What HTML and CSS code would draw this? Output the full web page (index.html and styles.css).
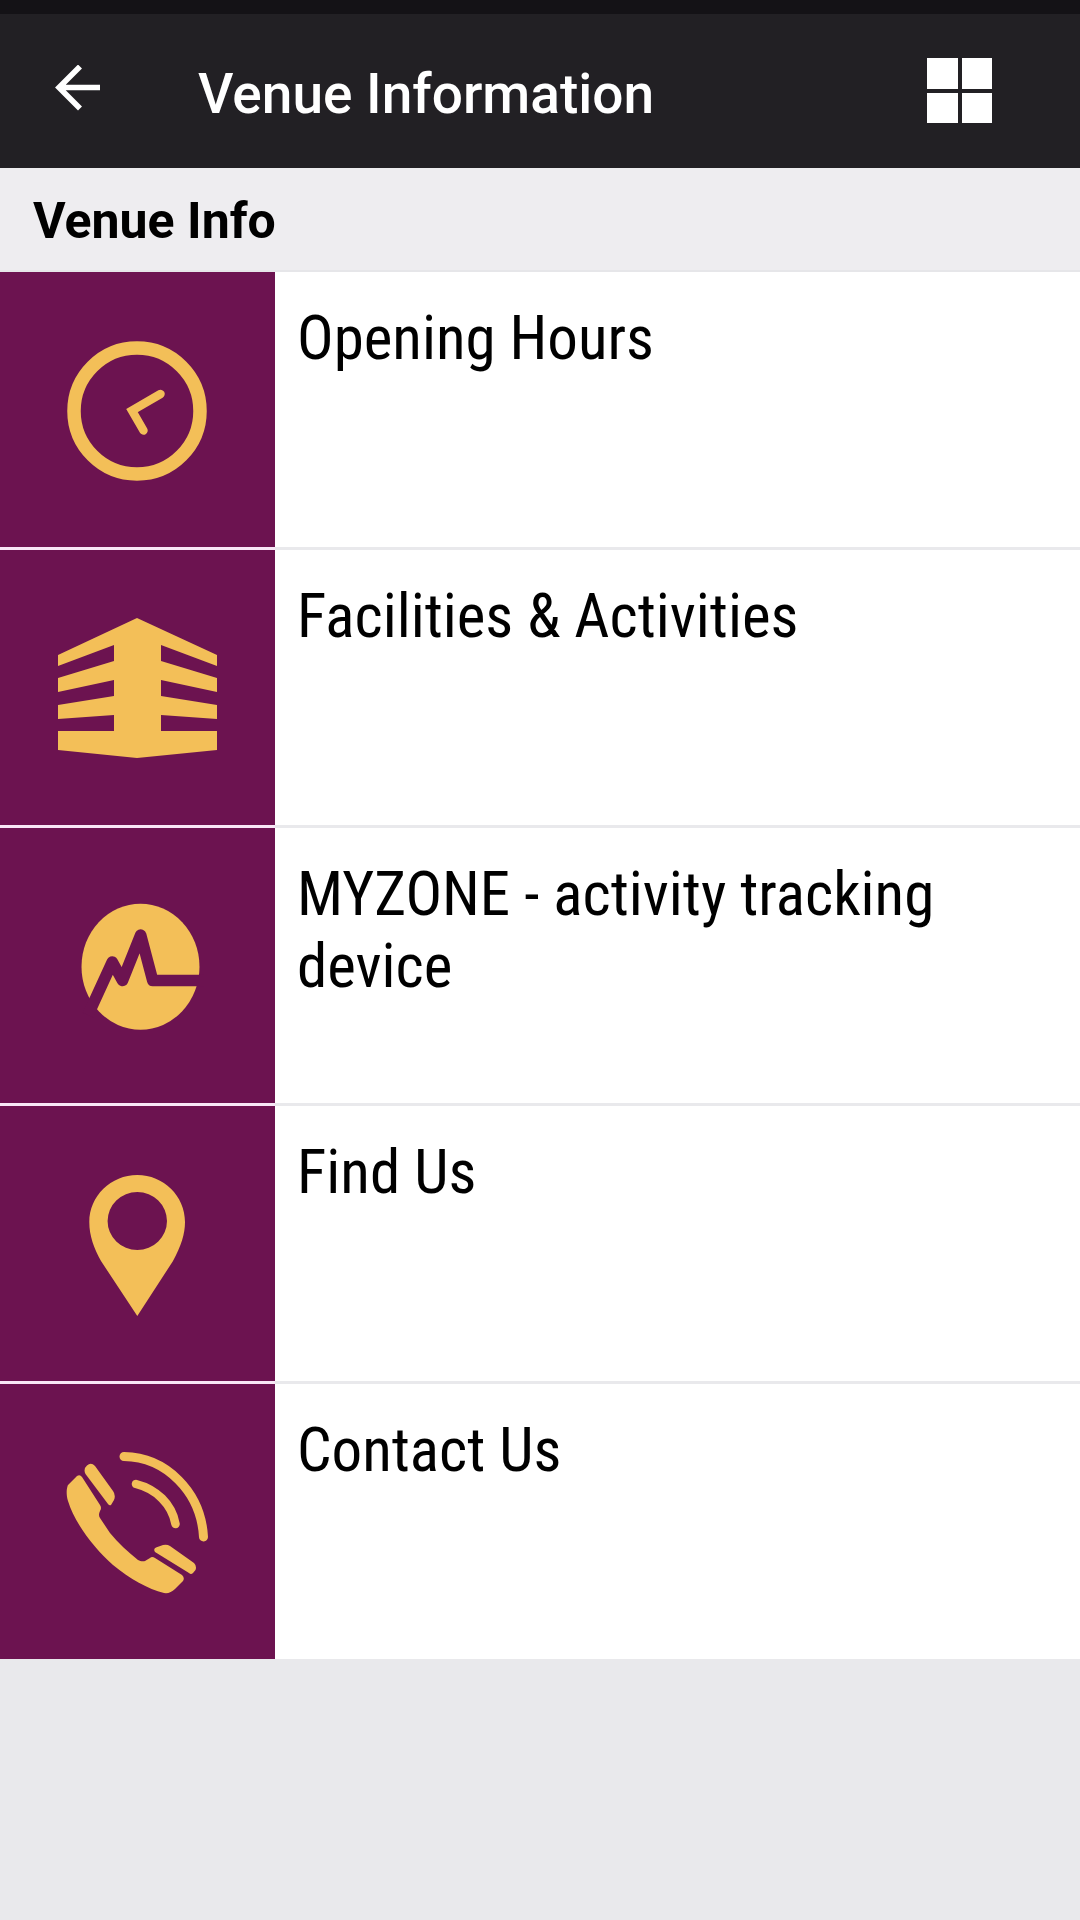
FILE: index.html
```html
<!DOCTYPE html>
<html lang="en">
<head>
<meta charset="utf-8">
<title>Venue Information</title>
<link rel="stylesheet" href="styles.css">
</head>
<body>
<div class="status"></div>
<header class="topbar">
  <svg class="back" viewBox="0 0 46 46"><path d="M45 22.500H5M25 1.500 4 22.500l21 21" fill="none" stroke="#fff" stroke-width="5.600"/></svg>
  <h1 class="title">Venue Information</h1>
  <div class="grid-icon"><i></i><i></i><i></i><i></i></div>
</header>
<div class="section">Venue Info</div>
<ul class="list">
  <li class="row">
    <div class="tile"><svg viewBox="0 0 275 275"><circle cx="137" cy="139" r="63" fill="none" stroke="#f3bf58" stroke-width="13.500"/><path d="M160.500 122 132 138.500l11.500 20" fill="none" stroke="#f3bf58" stroke-width="8.500" stroke-linecap="round"/></svg></div>
    <div class="label">Opening Hours</div>
  </li>
  <li class="row">
    <div class="tile"><svg viewBox="0 0 275 275"><path d="M137 68 217 105V116L161 95V111L217 128V142L161 130V146L217 155V169L161 165V181H217V200L137 208 58 200V181H114V165L58 169V155L114 146V130L58 142V128L114 111V95L58 116V105Z" fill="#f3bf58"/></svg></div>
    <div class="label">Facilities &amp; Activities</div>
  </li>
  <li class="row">
    <div class="tile"><svg viewBox="0 0 275 275"><ellipse cx="140.500" cy="138.700" rx="59" ry="63" fill="#f3bf58"/><path d="M88 187 112.300 134 122.500 152.500 140.700 107 152.700 152.500H204" fill="none" stroke="#6c1350" stroke-width="11.500" stroke-linejoin="round"/></svg></div>
    <div class="label">MYZONE - activity tracking device</div>
  </li>
  <li class="row">
    <div class="tile"><svg viewBox="0 0 275 275"><path fill-rule="evenodd" d="M137.300 69C163.500 69 185 90 185 116 185 128 181 140 173 155L137.300 210 101 155C94 142 89.300 130 89.300 116 89.300 90 111 69 137.300 69ZM137.300 86A29.700 29 0 1 0 137.300 144 29.700 29 0 0 0 137.300 86Z" fill="#f3bf58"/></svg></div>
    <div class="label">Find Us</div>
  </li>
  <li class="row">
    <div class="tile"><svg viewBox="0 0 275 275"><path d="M124 72.500C166 73 201 108 203.500 153" fill="none" stroke="#f3bf58" stroke-width="9" stroke-linecap="round"/><path d="M136 100C156 105 172 120 175.500 140" fill="none" stroke="#f3bf58" stroke-width="8.500" stroke-linecap="round"/><path d="M85.500 90Q83 85 87 81.500 91 78 95 82L113 107Q116 111 114 116L111 121Q109.500 122 108 120ZM155 168Q153 165 156 163.500L163 161Q167 160 170 162L194 179Q197 182 195.500 186L193 189Q191 191 189 189ZM77 92Q80 90 82 93L100 121Q102 124 100 127 98 131 100 134L110 149C118 159 128 168 138 176 141 178 145 177 145 177L150 174Q152 172 155 174L182 191Q185 194 183 197L175 205Q170 210 164 209C148 205 130 195 113 181 95 165 75 140 68 117 65 107 68 101 68 101Z" fill="#f3bf58"/></svg></div>
    <div class="label">Contact Us</div>
  </li>
</ul>
</body>
</html>
```
FILE: styles.css
```css
* { box-sizing: border-box; }
html, body { margin: 0; height: 100%; }
body { background: #e9e9ec; font-family: Roboto, "Noto Sans", sans-serif; }
.status { height: 14px; background: #141216; }
.topbar { height: 154px; background: #222024; display: flex; align-items: center; color: #fff; padding: 0 88px 0 55px; }
.back { width: 46px; height: 46px; margin-top: -6px; flex: none; }
.title { flex: 1; margin: 5px 0 0 97px; font-size: 55px; font-weight: 500; line-height: 60px; }
.grid-icon { width: 65px; height: 65px; display: grid; grid-template-columns: 1fr 1fr; gap: 4px; margin-top: -1px; }
.grid-icon i { background: #fff; }
.section { height: 104px; background: #eeedf0; border-bottom: 2px solid #e6e6e9; padding: 26px 0 0 33px; font-size: 50px; font-weight: 700; line-height: 54px; color: #000; }
.list { list-style: none; margin: 0; padding: 0; }
.row { height: 275px; background: #fff; display: flex; margin-bottom: 3px; }
.row:last-child { margin-bottom: 0; }
.tile { width: 275px; height: 275px; background: #6c1350; box-shadow: 0 3px 0 #f8e6f6; flex: none; }
.row:last-child .tile { box-shadow: none; }
.tile svg { display: block; width: 275px; height: 275px; }
.label { flex: 1; padding: 30px 100px 0 22px; font-stretch: 75%; font-size: 61px; line-height: 72px; color: #000; }
```
